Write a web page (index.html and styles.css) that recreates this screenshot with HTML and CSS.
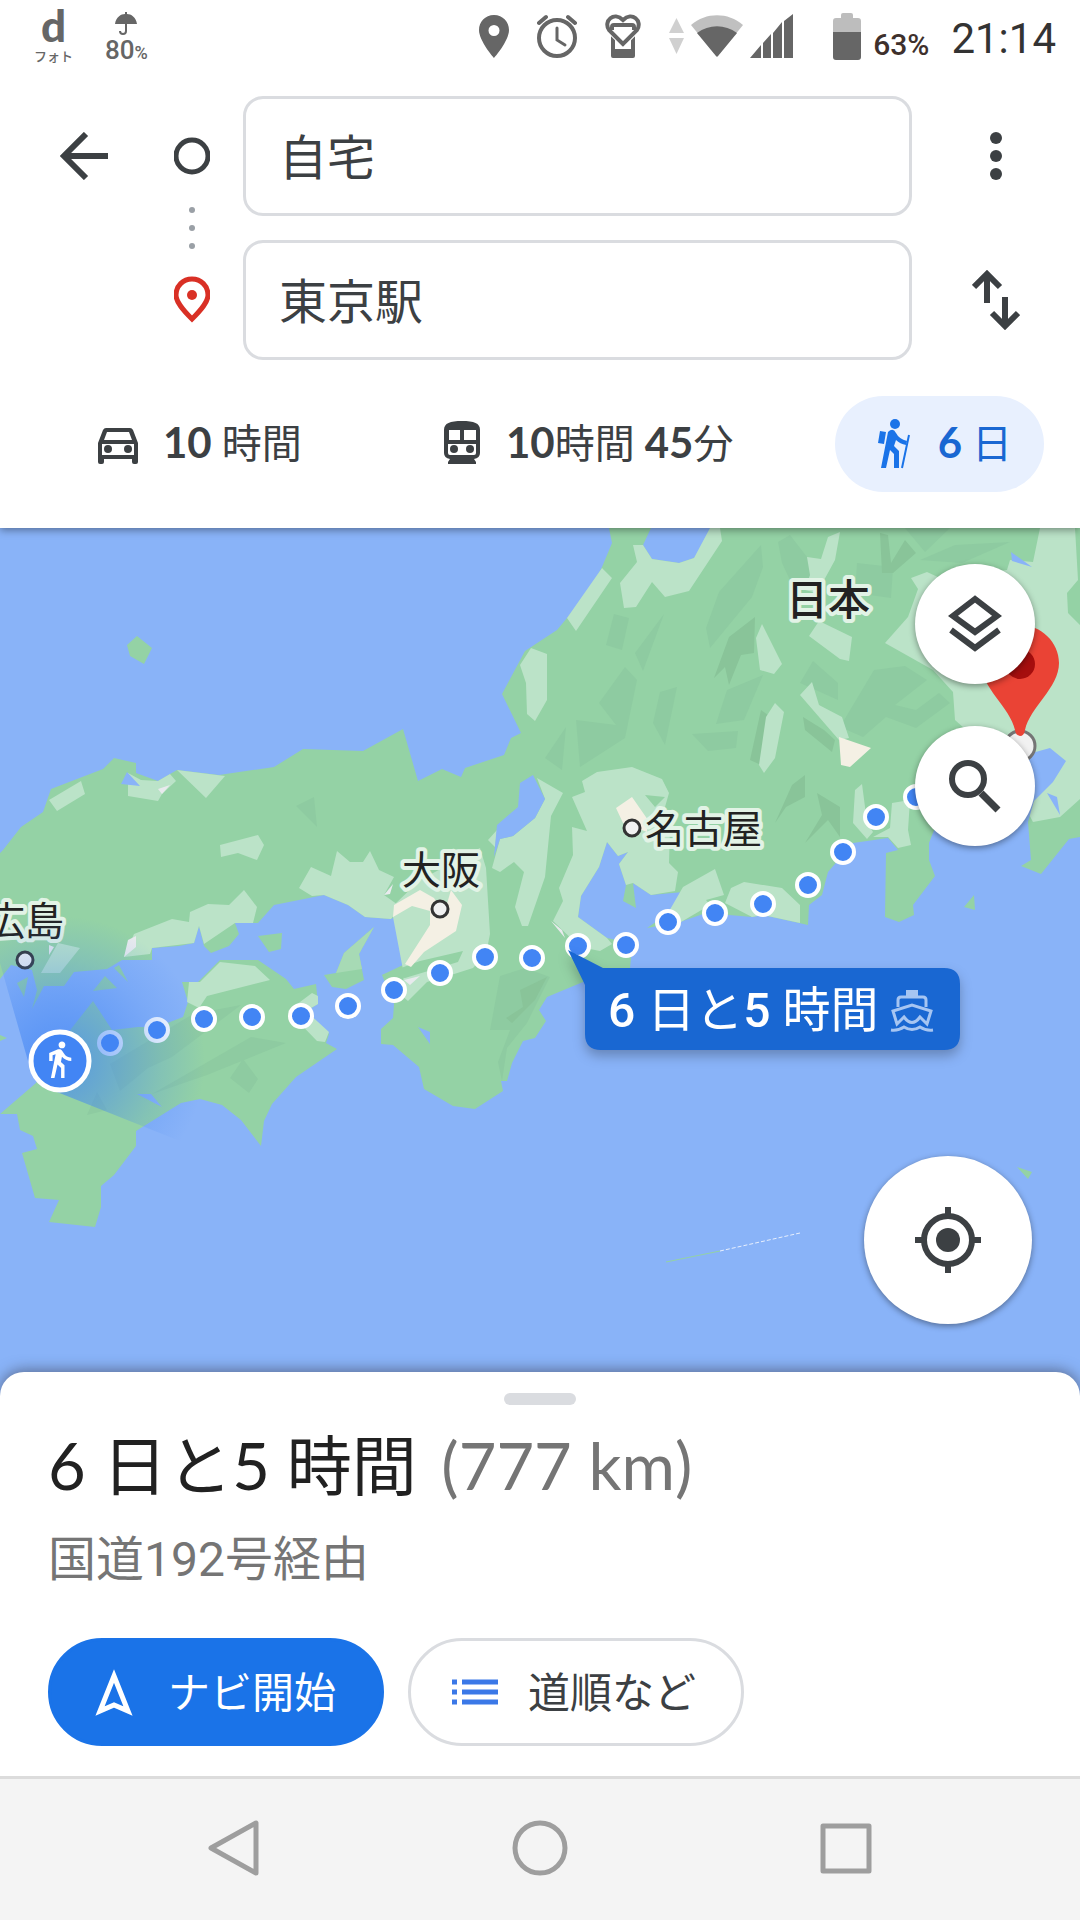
FILE: index.html
```html
<!DOCTYPE html>
<html lang="ja">
<head>
  <meta charset="UTF-8" />
  <meta name="viewport" content="width=device-width, initial-scale=1.0" />
  <title>経路 - 東京駅</title>
  <link rel="stylesheet" href="styles.css">
</head>
<body>
  <header class="top">
    <div class="status">
      <div class="status-left">
        <div class="notif"><span class="notif-d">d</span><span class="notif-photo">フォト</span></div>
        <div class="notif">
          <svg width="22" height="24" viewBox="0 0 22 24"><path d="M0 12C1 5 6 2 10 2V0h2v2c4 0 9 3 10 10z" fill="#666"/><path d="M11 11v8q0 3-3 3t-3-3" fill="none" stroke="#666" stroke-width="2"/></svg>
          <span class="notif-rain">80<small>%</small></span>
        </div>
      </div>
      <div class="status-right">
        <svg width="30" height="43" viewBox="0 0 30 43"><path fill="#666" fill-rule="evenodd" d="M15 0C6 0 0 7 0 15c0 11 15 28 15 28s15-17 15-28C30 7 24 0 15 0zm0 10a5.500 5.500 0 1 1 0 11 5.500 5.500 0 0 1 0-11z"/></svg>
        <svg width="40" height="44" viewBox="0 0 40 44" fill="none" stroke="#666" stroke-width="4" stroke-linecap="round"><circle cx="20" cy="24" r="18"/><path d="M2 9l7-6M38 9l-7-6"/><path d="M20 14v12l8 5" stroke-width="3"/></svg>
        <svg width="36" height="46" viewBox="0 0 36 46"><path fill="#666" fill-rule="evenodd" d="M6 22h24v21q0 2-2 2H8q-2 0-2-2zm4 4v10h16V26z"/><path d="M18 31L4 17C-2 8 9-2 18 7c9-9 20 1 14 10z" fill="#fff" stroke="#fff" stroke-width="6"/><path d="M7 17v-3q0-2 2-2h18q2 0 2 2v3" fill="none" stroke="#666" stroke-width="4"/><path d="M18 31L4 17C-2 8 9-2 18 7c9-9 20 1 14 10z" fill="none" stroke="#666" stroke-width="4"/></svg>
        <div class="net">
          <svg width="15" height="36" viewBox="0 0 15 36" fill="#d0d0d0"><path d="M0 15L7.500 0 15 15zM0 20h15L7.500 36z"/></svg>
          <svg width="52" height="42" viewBox="0 0 52 42"><path d="M0 10C15-3 37-3 52 10L26 42z" fill="#c0c0c0"/><path d="M6 18C18 9 34 9 46 18L27 41q-1 1-2 0z" fill="#666"/></svg>
          <svg width="43" height="44" viewBox="0 0 43 44" fill="#666"><path d="M0 44l11-13v13zM13 44V29l8-9v24zM23 44V19l9-11v36zM34 44V7l9-7v44z"/></svg>
        </div>
        <div class="battery">
          <svg width="28" height="47" viewBox="0 0 28 47"><path d="M0 19V8q0-3 3-3h5V2q0-2 2-2h8q2 0 2 2v3h5q3 0 3 3v11z" fill="#bdbdbd"/><path d="M0 19h28v25q0 3-3 3H3q-3 0-3-3z" fill="#666"/></svg>
          <span>63%</span>
        </div>
        <time>21:14</time>
      </div>
    </div>

    <form class="route-form">
      <button class="icon-btn back" type="button" aria-label="戻る">
        <svg width="48" height="48" viewBox="0 0 48 48" fill="none" stroke="#3c4043" stroke-width="6"><path d="M26 2L4 24l22 22M4 24h44"/></svg>
      </button>
      <svg class="route-marks" width="36" height="264" viewBox="0 0 36 264">
        <circle cx="18" cy="60" r="16" fill="none" stroke="#3c4043" stroke-width="5"/>
        <g fill="#9aa0a6"><circle cx="18" cy="114" r="3"/><circle cx="18" cy="132" r="3"/><circle cx="18" cy="150" r="3"/></g>
        <path d="M18 223C9 214 2 206 2 199c0-9 7-16 16-16s16 7 16 16c0 7-7 15-16 24z" fill="none" stroke="#d93025" stroke-width="5"/>
        <circle cx="18" cy="199" r="5" fill="#d93025"/>
      </svg>
      <div class="fields">
        <input type="text" value="自宅" aria-label="出発地">
        <input type="text" value="東京駅" aria-label="目的地">
      </div>
      <div class="side">
        <button class="icon-btn" type="button" aria-label="メニュー">
          <svg width="48" height="48" viewBox="0 0 48 48" fill="#3c4043"><circle cx="24" cy="6" r="6"/><circle cx="24" cy="24" r="6"/><circle cx="24" cy="42" r="6"/></svg>
        </button>
        <button class="icon-btn" type="button" aria-label="入れ替え">
          <svg width="48" height="60" viewBox="0 0 48 60" fill="none" stroke="#3c4043" stroke-width="6"><path d="M15 33V4M2 17L15 4l13 13M33 27v29M20 43l13 13 13-13"/></svg>
        </button>
      </div>
    </form>

    <nav class="modes">
      <button class="mode" type="button">
        <svg width="48" height="48" viewBox="0 0 48 48"><path fill="#3c4043" fill-rule="evenodd" d="M11 8h24q2 0 3 2l5 13v19q0 2-2 2h-2q-2 0-2-2v-3H9v3q0 2-2 2H5q-2 0-2-2V23l5-13q1-2 3-2zm1 4L9 20h28l-3-8zM7 24v11h32V24z"/><circle cx="13" cy="29" r="4" fill="#3c4043"/><circle cx="33" cy="29" r="4" fill="#3c4043"/></svg>
        <span><b>10</b> 時間</span>
      </button>
      <button class="mode" type="button">
        <svg width="48" height="48" viewBox="0 0 48 48"><path fill="#3c4043" fill-rule="evenodd" d="M24 1c12 0 18 2 18 9v23q0 5-6 6l2 3v2H10v-2l2-3q-6-1-6-6V10c0-7 6-9 18-9zM11 10v10h11V10zm15 0v10h12V10zM10 24v9q0 2 2 2h24q2 0 2-2v-9z"/><circle cx="16" cy="29" r="4" fill="#3c4043"/><circle cx="32" cy="29" r="4" fill="#3c4043"/></svg>
        <span><b>10</b>時間 <b>45</b>分</span>
      </button>
      <button class="mode active" type="button">
        <svg width="48" height="50" viewBox="0 0 48 50" fill="#1a73e8"><circle cx="25" cy="5" r="5"/><path d="M10 12l6 1-2 12-6-1zM18 13q5-5 8 1 3 6 11 8l-1 4q-6-1-10-5l-2 6 5 5v17h-5V35l-4-4-4 18h-5z"/><path d="M39 16l-7 33" stroke="#1a73e8" stroke-width="2"/></svg>
        <span><b>6</b> 日</span>
      </button>
    </nav>
  </header>

  <main class="map">
    <svg class="map-canvas" viewBox="0 528 1080 868" preserveAspectRatio="xMidYMin slice">
      <defs>
        <radialGradient id="cone" gradientUnits="userSpaceOnUse" cx="60" cy="1061" r="145">
          <stop offset="0" stop-color="#4285f4" stop-opacity=".75"/>
          <stop offset=".4" stop-color="#4285f4" stop-opacity=".45"/>
          <stop offset=".7" stop-color="#4285f4" stop-opacity=".2"/>
          <stop offset="1" stop-color="#4285f4" stop-opacity="0"/>
        </radialGradient>
      </defs>

      <!-- land -->
      <g fill="#94d2a5">
        <path d="M609 528L612 543 602 567 591 588 567 618 557 630 525 651 502 694 521 733 511 738 504 755 465 768 461 777 442 769 418 781 403 729 363 751 303 749 274 767 219 775 177 770 158 781 136 773V763L114 758 103 769 51 789 43 812 21 827 3 850 0 853V979L11 965 32 970 37 990 32 1009 44 986H64L74 972 107 969 122 960H152V948L179 946 194 943 199 926 204 946 211 953 229 946 239 934 235 923H258L274 905 324 895 348 905 365 917 391 919 412 906 430 911V925L405 964 382 975 394 1004 393 1018 381 1029V1044L393 1045 419 1067 424 1089 453 1106 475 1109 503 1091 501 1081H507L512 1063 523 1041 535 1038 546 1021 539 1010 547 997 583 982 630 968 631 958 626 942 607 938 578 917 581 896 599 867 607 842 618 856 628 852 619 864 626 885 623 901 636 908 633 883 651 895 683 892 673 910 647 928 680 922 706 913 752 917 763 915 808 925 809 905 822 895 828 872 853 843 888 838 898 850 886 853 885 917 899 922 914 915 913 905 935 876 929 860V843L940 815 1020 815 1028 822 1031 860 1021 866 1041 874 1069 839 1080 837V528H719L694 558 679 563 652 559 643 545 651 528Z"/>
        <path d="M182 982H198L220 960H258L286 979 294 989 316 984 318 1004 306 1011 329 1034 326 1043 337 1049 296 1077 272 1104 264 1121 261 1146 241 1120 222 1105 200 1099 181 1103 136 1131V1146L114 1175 101 1186V1207L95 1227 49 1222 59 1200 35 1198 22 1153 37 1149 33 1136 20 1130 17 1114H0L36 1083 71 1029 93 1001 112 1030 138 1027 157 1027 183 1017 188 1002Z"/>
        <path d="M374 927L344 953 336 973 324 975 332 987 346 989 364 980 359 954Z"/>
        <path d="M258 936L282 933 281 949 269 952ZM17 983L28 977 24 997ZM93 991L105 976 117 988ZM114 968L119 965 128 982ZM0 1035L7 1038 0 1041ZM127 645L137 636 152 648 144 664 130 656ZM964 907L974 895 975 910ZM1017 1167L1032 1172 1028 1179Z"/>
      </g>

      <!-- mountains -->
      <g fill="#8ecba1">
        <path d="M296 806L314 797 317 827ZM152 1094L251 1037 286 1043 207 1075ZM230 1078L243 1059 258 1079 249 1093ZM110 1064L193 1014 241 1005 172 1057 148 1068 120 1091ZM87 1115L97 1092 107 1110Z"/>
        <path d="M500 976L525 968 550 977 527 1023 507 1048 502 1081 498 1062 510 1030 490 1030Z"/>
        <path d="M761 545L763 567 752 597 710 648 706 628 719 592ZM614 614L629 618 622 650 606 645ZM664 614L643 671 635 653ZM625 667L637 680 625 738 580 767 576 720 616 725 599 703ZM660 692L677 687 665 745 653 723ZM566 727L562 770 545 758ZM692 734L738 731 736 748 708 751ZM727 690L763 675 744 720 716 724Z"/>
        <path d="M874 670L905 666 927 680 895 705 916 710 939 693 950 703 916 728 886 717 863 737 840 727ZM813 661L838 683V700L800 683ZM778 542L790 535 817 570 798 597 782 563ZM857 563L893 567 891 598 855 593ZM920 560L955 545 1010 542 962 563ZM905 528H950L925 552Z"/>
      </g>
      <g fill="#89c499">
        <path d="M520 990L547 977 535 1000 512 1023 506 1018 523 1007ZM755 617L754 653 741 655 729 685 725 667 714 678 729 637ZM761 710L768 715 761 765 750 760ZM803 717L824 730 835 740 832 752 805 730ZM805 775V797L786 807 775 823 792 785ZM817 793L840 807V837L828 820 805 843 822 815ZM880 533L888 535 891 563 905 540 916 553 893 573H882Z"/>
      </g>

      <!-- lowlands -->
      <g fill="#bbe3c8">
        <path d="M49 800L81 781 85 794 57 811ZM128 773L141 780 158 781 170 774 176 781 162 794 158 801 128 796ZM177 770L225 776 206 798ZM220 845L258 835 264 845 257 860 238 853 221 857ZM58 943L80 948 60 973H41Z"/>
        <path d="M299 888L311 867 331 876 337 851 350 862H363L370 851 379 870 394 877 384 895 401 907 391 919 365 917 348 905 324 895 312 896Z"/>
        <path d="M393 917L394 905 420 880 480 848 486 868 490 934 486 954 473 968 451 975 427 982 408 1001 401 995 404 975Z"/>
        <path d="M537 778L563 793 551 816 545 877 528 926H522L515 907 524 872 514 862 500 872 492 868 500 839 513 836 535 818 545 799ZM488 840L497 830 495 847Z"/>
        <path d="M582 781L597 772 632 767 662 779 669 793 665 807 670 827 669 863 678 872 675 891 651 895 633 883 626 885 619 864 628 852 618 856 607 842 599 867 581 896 578 917 607 938 612 944 600 951 580 947 553 921 563 901 559 888 573 855 572 827 587 831 572 797 585 792Z"/>
        <path d="M715 869L724 895 706 900 710 905 681 922 668 913 683 887ZM725 903L731 888 744 882 782 888 800 905V923L763 915 752 917Z"/>
        <path d="M710 528H720L722 541 689 591 665 597 652 582 636 607 624 608 620 583 637 562 633 545H643L652 559 679 563 694 558ZM602 568L612 578 576 631 567 618ZM520 665L531 648 547 654V700L535 721 527 714 526 683Z"/>
        <path d="M840 532L835 560 817 593 805 590 810 575 807 557 821 559 828 537ZM819 621L852 637 849 661 840 659 809 636ZM762 624L782 664 774 674 760 670 756 638ZM775 703L784 712 775 758 764 773 759 765 766 717ZM812 682L819 705 842 717 849 738 839 740 800 695Z"/>
        <path d="M1040 528H1075L1078 580 1067 593 1068 613 1080 625V799L1060 817 1033 822 1000 760 955 720 953 692 933 670 885 643 908 617 918 589 911 578 927 572 940 578 1007 570 1010 560 1033 562Z"/>
        <path d="M853 823L855 790 862 784 867 822 873 832 867 839ZM892 803L910 800 908 830 911 845 898 848 888 837H873L890 828Z"/>
        <path d="M124 957L134 934 172 919 189 922 190 912 208 904 229 905 244 890 257 907 253 923H235L204 944 199 926 194 943 152 948 150 954ZM187 1002L189 982H200L220 962 255 966 270 980 207 996 199 1008ZM288 1011L312 993 318 996V1004L306 1011 329 1032 325 1042 317 1041Z"/>
      </g>
      <path d="M382 975L420 961 463 951 458 962 405 978ZM665 797L645 795 655 807Z" fill="#94d2a5"/>
      <path d="M374 927L344 953 336 973 362 969 359 954Z" fill="#a7dab5"/>

      <!-- cities -->
      <g fill="#f4f0e4">
        <path d="M393 917L394 905 420 890 434 898 444 914 451 890 462 905 456 931 424 952 411 967 405 964 430 925V911L412 906ZM616 808L632 797 648 820 647 832 623 823ZM839 737L871 748 850 767 841 765Z"/>
      </g>
      <path d="M49 945V955L54 947ZM128 940L136 936V947L124 957ZM384 895L393 884 390 894ZM162 794L170 785 158 789ZM404 980L420 976 410 985ZM551 921L562 930 565 938Z" fill="#e8eaed"/>

      <!-- lakes and bays -->
      <g fill="#89b3f8">
        <path d="M533 775L520 783 518 807 497 825 494 857 500 839 513 836 535 818 545 799Z"/>
        <path d="M418 1027L430 1032V1044ZM137 1094H151L162 1107ZM127 772L121 784 140 786ZM1011 552L1032 567 1012 561ZM1047 793L1057 797 1060 815Z"/>
        <path d="M1020 753H1032L1050 748 1066 761 1053 782 1034 801 1028 822H960L990 780Z"/>
      </g>
      <path d="M666 1262L720 1251" stroke="#94d2a5" stroke-width="1"/>
      <path d="M720 1251L800 1233" stroke="#e8f0fe" stroke-width="1" stroke-dasharray="4 2"/>

      <!-- place names -->
      <g class="place">
        <text x="402" y="884">大阪</text>
        <text x="645" y="843">名古屋</text>
        <text x="-14" y="935">広島</text>
        <text class="country" x="786" y="615">日本</text>
      </g>
      <g fill="#f1f1f1" stroke="#333" stroke-width="3">
        <circle cx="440" cy="909" r="8"/>
        <circle cx="632" cy="828" r="8"/>
        <circle cx="25" cy="960" r="8"/>
        <circle cx="1020" cy="746" r="15" stroke="#757575"/>
      </g>

      <!-- walking route -->
      <g class="route-dots">
        <circle cx="110" cy="1043" r="11"/><circle cx="157" cy="1030" r="11"/><circle cx="204" cy="1019" r="11"/>
        <circle cx="252" cy="1017" r="11"/><circle cx="301" cy="1016" r="11"/><circle cx="348" cy="1006" r="11"/>
        <circle cx="394" cy="990" r="11"/><circle cx="440" cy="973" r="11"/><circle cx="485" cy="957" r="11"/>
        <circle cx="532" cy="958" r="11"/><circle cx="578" cy="946" r="11"/><circle cx="626" cy="945" r="11"/>
        <circle cx="668" cy="922" r="11"/><circle cx="715" cy="913" r="11"/><circle cx="763" cy="904" r="11"/>
        <circle cx="808" cy="885" r="11"/><circle cx="843" cy="852" r="11"/><circle cx="876" cy="817" r="11"/>
        <circle cx="916" cy="797" r="11"/>
      </g>

      <!-- heading cone and current position -->
      <path d="M28 1061L-20 893 100 880 230 960 230 1161 57 1092Z" fill="url(#cone)"/>
      <circle cx="60" cy="1061" r="29" fill="#4285f4" stroke="#fff" stroke-width="5"/>
      <path transform="translate(39 1039) scale(1.700)" fill="#fff" d="M13.500 5.500c1.100 0 2-.9 2-2s-.9-2-2-2-2 .9-2 2 .9 2 2 2zM9.800 8.900L7 23h2.100l1.800-8 2.100 2v6h2v-7.500l-2.100-2 .6-3C14.800 12 16.800 13 19 13v-2c-1.900 0-3.500-1-4.300-2.400l-1-1.600c-.4-.6-1-1-1.700-1-.3 0-.5.1-.8.1L6 8.300V13h2V9.600z"/>

      <!-- destination pin -->
      <path d="M1020 736q-4 0-5-6c-5-23-34-42-34-67 0-21 18-38 39-38s39 17 39 38c0 25-29 44-34 67q-1 6-5 6z" fill="#ea4335"/>
      <circle cx="1020" cy="664" r="15" fill="#a50e0e"/>

      <!-- duration callout -->
      <g class="callout">
        <path d="M568 950L603 968H944q16 0 16 16V1034q0 16-16 16H601q-16 0-16-16V985Z" fill="#1967d2"/>
        <text x="608" y="1027"><tspan class="num">6</tspan> 日と<tspan class="num">5</tspan> 時間</text>
        <g transform="translate(891 990)" fill="none" stroke="#a6c5f2" stroke-width="3">
          <path d="M15 0h12v6H15z" fill="#a6c5f2" stroke="none"/>
          <path d="M7 17V10q0-3 3-3h22q3 0 3 3v7M6 34L2 21 21 15l19 6-4 13-7-7q-8 11-16 0z"/>
          <path d="M0 40q7 1 13-3 8 5 16 0 6 4 13 3"/>
        </g>
      </g>
    </svg>

    <div class="map-tools">
      <button class="round" type="button" aria-label="地図の種類">
        <svg width="54" height="58" viewBox="0 0 54 58" fill="none" stroke="#3c4043" stroke-width="6"><path d="M27 4L5 21l22 16 22-16zM3 35l24 18 24-18"/></svg>
      </button>
      <button class="round" type="button" aria-label="検索">
        <svg width="54" height="54" viewBox="0 0 54 54" fill="none" stroke="#3c4043" stroke-width="6"><circle cx="20" cy="20" r="16"/><path d="M33 34l17 17" stroke-width="7"/></svg>
      </button>
    </div>
    <button class="round locate" type="button" aria-label="現在地">
      <svg width="66" height="66" viewBox="0 0 66 66" fill="none" stroke="#3c4043" stroke-width="6"><circle cx="33" cy="33" r="24"/><circle cx="33" cy="33" r="12" fill="#3c4043" stroke="none"/><path d="M33 0v9M33 57v9M0 33h9M57 33h9"/></svg>
    </button>
  </main>

  <section class="sheet">
    <div class="handle"></div>
    <h1>6 日と5 時間 <span class="distance">(777 km)</span></h1>
    <p class="via">国道192号経由</p>
    <div class="actions">
      <button class="btn primary" type="button">
        <svg width="48" height="48" viewBox="0 0 48 48" fill="none" stroke="#fff" stroke-width="5"><path d="M24 8l14 35-14-6-14 6z"/></svg>
        <span>ナビ開始</span>
      </button>
      <button class="btn" type="button">
        <svg width="48" height="48" viewBox="0 0 48 48" stroke="#3b78e7" stroke-width="5"><path d="M12 14h36M12 24h36M12 34h36M2 14h5M2 24h5M2 34h5"/></svg>
        <span>道順など</span>
      </button>
    </div>
  </section>

  <footer class="sysnav">
    <button class="icon-btn" type="button" aria-label="戻る">
      <svg width="60" height="60" viewBox="0 0 60 60"><path d="M52 5v50L7 30z"/></svg>
    </button>
    <button class="icon-btn" type="button" aria-label="ホーム">
      <svg width="60" height="60" viewBox="0 0 60 60"><circle cx="30" cy="30" r="25"/></svg>
    </button>
    <button class="icon-btn" type="button" aria-label="最近使用したアプリ">
      <svg width="60" height="60" viewBox="0 0 60 60"><rect x="7" y="8" width="46" height="45"/></svg>
    </button>
  </footer>
</body>
</html>
```
FILE: styles.css
```css
:root {
  --ink: #3c4043;
  --line: #dadce0;
  --blue: #1a73e8;
  --status: #666;
  --sea: #89b3f8;
}
* {
  box-sizing: border-box;
}
body {
  margin: 0;
  min-height: 100vh;
  display: flex;
  flex-direction: column;
  background: #fff;
  color: var(--ink);
  font-family: Roboto, "Noto Sans CJK JP", sans-serif;
}
button {
  border: none;
  background: none;
  padding: 0;
  color: inherit;
  font-family: inherit;
  cursor: pointer;
}
svg {
  display: block;
  flex: none;
}
.icon-btn {
  display: flex;
  align-items: center;
  justify-content: center;
}

/* header */
.top {
  position: relative;
  z-index: 1;
  background: #fff;
  padding-bottom: 36px;
  box-shadow: 0 2px 8px rgba(0, 0, 0, 0.4);
}
.status {
  display: flex;
  justify-content: space-between;
  height: 72px;
  padding: 0 24px 0 34px;
  color: var(--status);
}
.status-left {
  display: flex;
  gap: 32px;
}
.notif {
  display: flex;
  flex-direction: column;
  align-items: center;
  justify-content: flex-end;
  height: 67px;
}
.notif-d {
  font-family: Lato, sans-serif;
  font-weight: 900;
  font-size: 44px;
  line-height: 44px;
}
.notif-photo {
  font-size: 13px;
  line-height: 20px;
  font-weight: 500;
}
.notif-rain {
  font-size: 26px;
  line-height: 28px;
  font-weight: 500;
}
.notif-rain small {
  font-size: 18px;
}
.status-right {
  display: flex;
  align-items: center;
  gap: 28px;
}
.net {
  display: flex;
  align-items: center;
  gap: 7px;
}
.battery {
  display: flex;
  align-items: center;
  gap: 12px;
  margin-left: 12px;
  color: #3e302c;
  font-size: 30px;
  line-height: 36px;
  font-weight: 500;
}
.battery span {
  padding-top: 18px;
}
.status time {
  margin-left: -6px;
  padding-top: 5px;
  font-size: 42px;
  line-height: 48px;
  color: #333;
}

.route-form {
  display: grid;
  grid-template-columns: 144px 99px 1fr 168px;
  margin: 24px 0 36px;
}
.back {
  height: 120px;
  padding-left: 24px;
}
.route-marks {
  margin-left: 30px;
}
.fields {
  display: flex;
  flex-direction: column;
  gap: 24px;
  min-width: 0;
}
.fields input {
  width: 100%;
  height: 120px;
  padding: 0 33px 5px;
  border: 3px solid var(--line);
  border-radius: 20px;
  background: #fff;
  color: var(--ink);
  font-family: inherit;
  font-size: 48px;
}
.side {
  display: flex;
  flex-direction: column;
  gap: 24px;
}
.side .icon-btn {
  height: 120px;
}

.modes {
  display: flex;
  justify-content: space-between;
  padding: 0 36px 0 60px;
}
.mode {
  display: flex;
  align-items: center;
  gap: 20px;
  height: 96px;
  padding: 0 32px 0 35px;
  border-radius: 48px;
  font-size: 40px;
  white-space: nowrap;
}
.mode span,
.btn span {
  padding-bottom: 6px;
}
.mode b {
  font-family: Lato, sans-serif;
  font-weight: 700;
  font-size: 42px;
}
.mode.active {
  background: #e8f0fe;
  color: #1967d2;
}

/* map */
.map {
  position: relative;
  flex: 1;
  min-height: 400px;
  background: var(--sea);
  overflow: hidden;
}
.map-canvas {
  position: absolute;
  inset: 0;
  width: 100%;
  height: 100%;
}
.place text {
  font-size: 39px;
  fill: #222;
  stroke: #e2f3e6;
  stroke-width: 8px;
  stroke-linejoin: round;
  paint-order: stroke;
}
.place .country {
  font-size: 42px;
  font-weight: 500;
}
.route-dots {
  fill: #4285f4;
  stroke: #fff;
  stroke-width: 4px;
}
.callout {
  filter: drop-shadow(0 6px 6px rgba(0, 0, 0, 0.25));
}
.callout text {
  font-size: 48px;
  fill: #fff;
}
.callout .num {
  font-weight: 500;
}
.map-tools {
  position: absolute;
  top: 36px;
  right: 45px;
  display: flex;
  flex-direction: column;
  gap: 42px;
}
.round {
  display: flex;
  align-items: center;
  justify-content: center;
  width: 120px;
  height: 120px;
  border-radius: 50%;
  background: #fff;
  box-shadow: 0 2px 6px rgba(0, 0, 0, 0.4);
}
.locate {
  position: absolute;
  right: 48px;
  bottom: 72px;
  width: 168px;
  height: 168px;
}

/* bottom sheet */
.sheet {
  position: relative;
  margin-top: -24px;
  padding: 21px 48px 30px;
  border-radius: 24px 24px 0 0;
  background: #fff;
  box-shadow: 0 -2px 14px rgba(60, 64, 80, 0.6);
}
.handle {
  width: 72px;
  height: 12px;
  margin: 0 auto 20px;
  border-radius: 6px;
  background: var(--line);
}
.sheet h1 {
  margin: 0;
  font-family: Lato, "Noto Sans CJK JP", sans-serif;
  font-weight: 400;
  font-size: 65px;
  line-height: 80px;
  color: #212121;
}
.distance {
  margin-left: 8px;
  color: #757575;
}
.via {
  margin: 25px 0 48px;
  font-size: 48px;
  line-height: 60px;
  color: #757575;
}
.actions {
  display: flex;
  gap: 24px;
}
.btn {
  display: flex;
  align-items: center;
  gap: 30px;
  height: 108px;
  padding: 0 45px 0 39px;
  border: 3px solid var(--line);
  border-radius: 54px;
  font-size: 42px;
  white-space: nowrap;
}
.btn.primary {
  border-color: var(--blue);
  background: var(--blue);
  color: #fff;
}

/* system navigation bar */
.sysnav {
  position: relative;
  display: flex;
  height: 144px;
  padding: 0 81px;
  border-top: 3px solid #dcdcdc;
  background: #f4f4f4;
}
.sysnav .icon-btn {
  flex: 1;
  padding-bottom: 3px;
}
.sysnav svg {
  fill: none;
  stroke: #9e9e9e;
  stroke-width: 5px;
  stroke-linejoin: round;
}
```
